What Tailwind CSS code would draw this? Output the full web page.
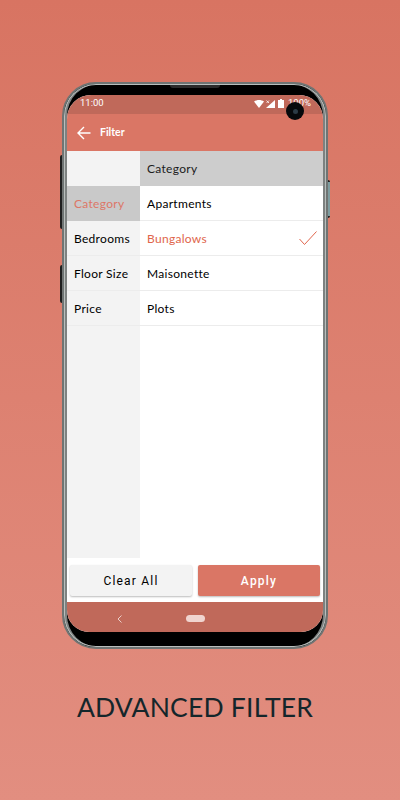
<!DOCTYPE html>
<html>
<head>
<meta charset="utf-8">
<script src="https://cdn.jsdelivr.net/npm/@tailwindcss/browser@4"></script>
</head>
<body class="m-0">
<div class="w-[400px] h-[800px] overflow-hidden flex flex-col items-center bg-gradient-to-b from-[#d87462] to-[#e28e80] font-['Lato',sans-serif]">

  <!-- phone -->
  <div class="relative mt-[82px] mr-[10px] w-[266px] h-[567px] rounded-[34px] bg-black border-[2px] border-[#6f7473] shadow-[inset_0_0_0_1px_#b9bebc,inset_3px_0_0_#7d8180,inset_-3px_0_0_#7d8180]">
    <!-- side buttons -->
    <div class="absolute left-[-4px] top-[71px] w-[2px] h-[74px] bg-[#1f1f1f] rounded-l"></div>
    <div class="absolute left-[-4px] top-[181px] w-[2px] h-[38px] bg-[#1f1f1f] rounded-l"></div>
    <div class="absolute right-[-4px] top-[96px] w-[2px] h-[38px] bg-[#7d9da0] border-y-2 border-[#1f1f1f] rounded-r"></div>
    <!-- speaker -->
    <div class="absolute left-[106px] top-[1px] w-[50px] h-[3px] bg-[#2b2b2b] rounded-b"></div>

    <!-- screen -->
    <div class="absolute left-[3px] top-[11px] w-[256px] h-[537px] rounded-t-[24px] rounded-b-[22px] overflow-hidden bg-white flex flex-col">
      <!-- status bar -->
      <div class="h-[19px] pb-[2px] bg-[#c0695a] flex items-center justify-between pl-[13px] pr-[12px] text-white text-[9.5px] font-['Roboto',sans-serif]">
        <span>11:00</span>
        <div class="flex items-center gap-[2px]">
          <svg width="10" height="8" viewBox="0 0 10 8"><path d="M0 1.5C3 -.5 7 -.5 10 1.5L5 8z" fill="#fff"/></svg>
          <svg width="9" height="8" viewBox="0 0 9 8"><path d="M9 0V8H0z" fill="#fff"/><path d="M0.5 0.5L3 3M3 0.5L0.5 3" stroke="#fff" stroke-width=".8"/></svg>
          <svg width="6" height="9" viewBox="0 0 6 9" class="ml-[1px]"><path d="M2 0H4V1H6V9H0V1H2z" fill="#fff"/></svg>
          <span class="ml-[2px]">100%</span>
        </div>
      </div>
      <!-- app bar -->
      <div class="h-[37px] bg-[#da7665] flex items-center pl-[10px] gap-[9px] text-white">
        <svg width="14" height="14" viewBox="0 0 14 14" fill="none" stroke="#fff" stroke-width="1.4"><path d="M13.5 7H1M7 1L1 7l6 6"/></svg>
        <span class="text-[10.5px] font-bold pt-[1px]">Filter</span>
      </div>

      <!-- filter panes -->
      <div class="flex-1 flex min-h-0 text-[12px] tracking-[0.3px] text-black">
        <div class="w-[73px] bg-[#f3f3f3] flex flex-col">
          <div class="h-[35px]"></div>
          <div class="h-[35px] bg-[#c9c9c9] flex items-center pl-[7px] pt-[1px] text-[#dd7767]">Category</div>
          <div class="h-[35px] flex items-center pl-[7px] pt-[1px] border-b border-[#ececec]">Bedrooms</div>
          <div class="h-[35px] flex items-center pl-[7px] pt-[1px] border-b border-[#ececec]">Floor Size</div>
          <div class="h-[35px] flex items-center pl-[7px] pt-[1px] border-b border-[#ececec]">Price</div>
        </div>
        <div class="flex-1 flex flex-col">
          <div class="h-[35px] bg-[#cdcdcd] flex items-center pl-[7px] pt-[1px] text-[#1c1c1c]">Category</div>
          <div class="h-[35px] flex items-center pl-[7px] pt-[1px] border-b border-[#ececec]">Apartments</div>
          <div class="h-[35px] flex items-center justify-between pl-[7px] pr-[6px] border-b border-[#ececec] text-[#e0654c]">
            <span class="pt-[1px]">Bungalows</span>
            <svg width="18" height="14" viewBox="0 0 18 14" fill="none" stroke="#e0654c" stroke-width="1"><path d="M0.5 8L5.5 13.5L17.5 0.5"/></svg>
          </div>
          <div class="h-[35px] flex items-center pl-[7px] pt-[1px] border-b border-[#ececec]">Maisonette</div>
          <div class="h-[35px] flex items-center pl-[7px] pt-[1px] border-b border-[#ececec]">Plots</div>
        </div>
      </div>

      <!-- buttons -->
      <div class="h-[44px] flex gap-[6px] px-[3px] pt-[7px] pb-[6px] bg-white font-['Roboto',sans-serif] text-[12px] tracking-[1.2px]">
        <div class="w-[122px] rounded-[2px] bg-[#f3f3f3] shadow-[0_1px_2px_#0004] flex items-center justify-center text-black">Clear All</div>
        <div class="flex-1 rounded-[2px] bg-[#da7665] shadow-[0_1px_2px_#0004] flex items-center justify-center text-white font-medium">Apply</div>
      </div>

      <!-- nav bar -->
      <div class="h-[30px] bg-[#c0695a] relative flex items-center justify-center">
        <svg class="absolute left-[50px] top-[13px]" width="5" height="8" viewBox="0 0 5 8" fill="none" stroke="#eccfc9" stroke-width="1"><path d="M4.5 .5L1 4l3.5 3.5"/></svg>
        <div class="w-[19px] h-[7px] rounded-full bg-[#f0d4cf] mt-[2px]"></div>
      </div>
    </div>

    <!-- camera -->
    <div class="absolute left-[222px] top-[18px] w-[18px] h-[18px] rounded-full bg-[#07090c] flex items-center justify-center">
      <div class="w-[5px] h-[5px] rounded-full bg-[#2c3b46]"></div>
    </div>
  </div>

  <div class="mt-[40px] mr-[10px] text-[26.5px] leading-[36px] text-[#14262b] tracking-[0.2px]">ADVANCED FILTER</div>
</div>
</body>
</html>
